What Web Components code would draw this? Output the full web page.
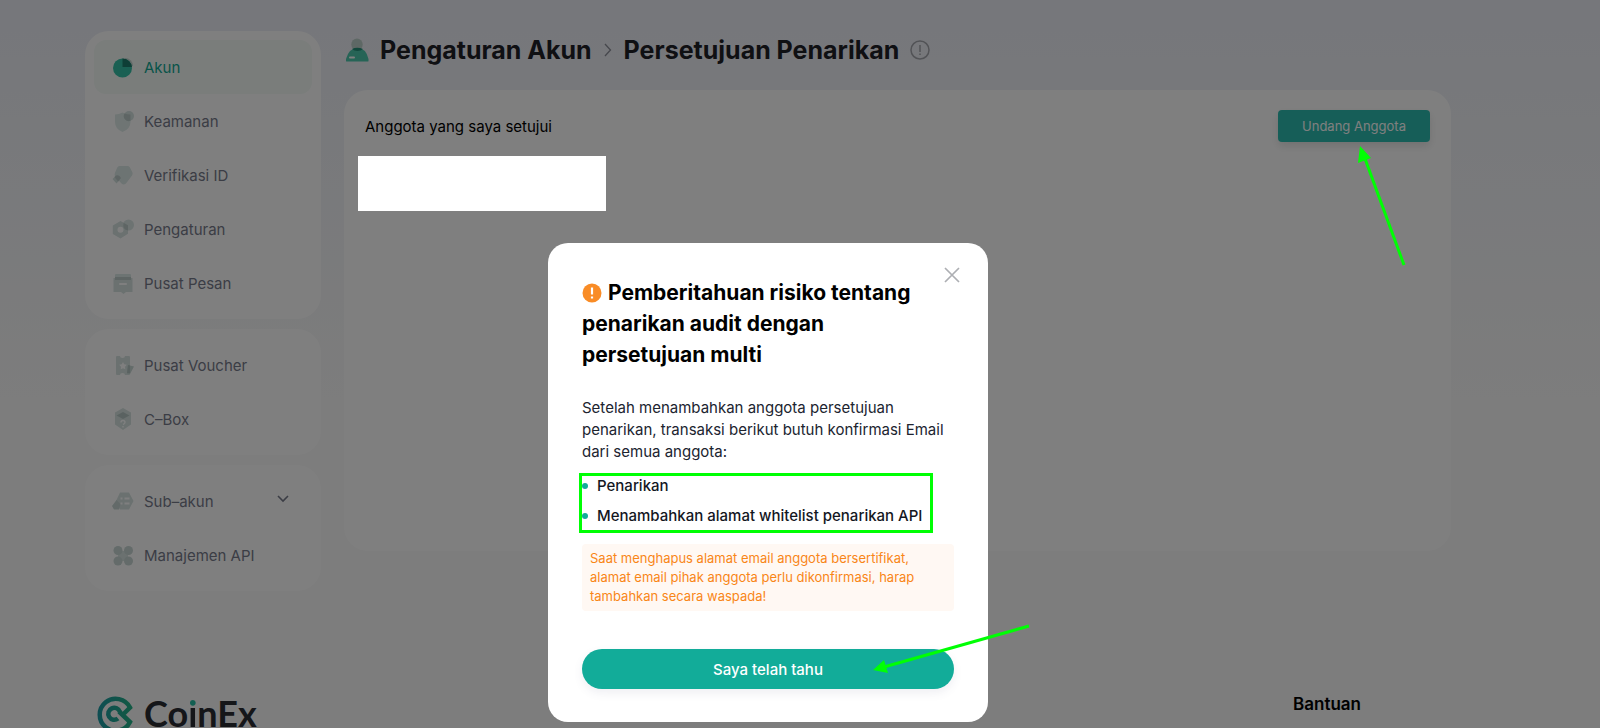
<!DOCTYPE html>
<html lang="id">
<head>
<meta charset="utf-8">
<meta name="viewport" content="width=device-width, initial-scale=1">
<title>CoinEx – Persetujuan Penarikan</title>
<style>
  html { height: 100%; }
  body {
    margin: 0;
    min-height: 100%;
    overflow: hidden;
    font-family: Inter, "Noto Sans", sans-serif;
    font-size: 15px;
    color: #000;
    background: linear-gradient(#eceef6, #f0f2f7 120px, #fafafa 400px) #fafafa;
  }
</style>
</head>
<body>
<account-page></account-page>
<risk-dialog></risk-dialog>

<script>
const define = (name, html, setup) => {
  const template = document.createElement('template');
  template.innerHTML = html;
  customElements.define(name, class extends HTMLElement {
    constructor() {
      super();
      this.attachShadow({ mode: 'open' }).append(template.content.cloneNode(true));
    }
    connectedCallback() { if (setup) setup(this, this.shadowRoot); }
  });
};

const icons = {
  akun: '<path d="M12 3a8 8 0 0 1 8 8h-8z" transform="translate(1 -1)" fill="#c7d6d2"/><circle cx="10.500" cy="12" r="9.500" fill="#35c0a6"/><path d="M10.500 2.500A9.500 9.500 0 0 1 20 11h-9.500z" fill="#1c7d6d"/>',
  keamanan: '<path d="M3 4.500q4 0 7.500-2 3.500 2 8 2V12q0 7-8 10-7.500-3-7.500-10z" fill="#deebe9"/><circle cx="17" cy="6" r="5" fill="#d5e2e0"/><path d="M12.500 3.500q3 1 6 1V10.800a5 5 0 0 1-6-7.300z" fill="#bccbc9"/>',
  id: '<path d="M7.500 2h8q1.500 0 2.300 1.200l2.600 5q.600 1.500-.200 3L14 19.500q-2.500 1.800-4.500 0L3.500 13q-1.500-2-.600-4L5 4q.800-2 2.500-2z" fill="#dbe8e6"/><path d="M.500 15 4 11.500l4 4L4.500 19.500z" fill="#d3e1df"/><path d="M4 11.500q2-.500 3.500.500l1.500 2-3 3.500L2.500 13z" fill="#bccbc9"/>',
  setting: '<path fill-rule="evenodd" d="M8.500 3 16 7.200v8.600L8.500 20.500.800 16V7.500zM8.500 8.800a3 3 0 1 0 0 6 3 3 0 0 0 0-6z" fill="#d6e3e1"/><circle cx="16.500" cy="7" r="5.500" fill="#dae7e5"/><path d="M11.500 4.700 16 7.200v5.300q-6-1-4.500-7.800z" fill="#bccbc9"/>',
  pesan: '<rect x="3" y="2" width="16" height="5" rx="1" fill="#dbe8e6"/><path d="M2 6h18.500v14H14l-2.500 2L9 20H1.500V6z" fill="#d6e3e1"/><rect x="3" y="5" width="16" height="3" fill="#bccbc9"/><rect x="7" y="11" width="8" height="2" rx="1" fill="#fff"/>',
  voucher: '<path fill-rule="evenodd" d="M5 2h3q0 2 2.500 2T13 2h4q1 0 1 1v17q0 1-1 1h-4q0-2-2.500-2T8 21H5q-1 0-1-1V3q0-1 1-1zM11 8l1.200 2.200 2.600.500-1.800 2 .300 2.500-2.300-1-2.300 1 .300-2.500-1.800-2 2.600-.500z" fill="#d6e3e1"/><path d="m16 11 6 1.500-4 7.500h-3z" fill="#c9d8d5"/><path d="m16 11 2 .500V19h-3z" fill="#b5c5c2"/>',
  box: '<path d="m11 0 8 4.500v12L11 22l-8-5.500v-12z" fill="#d6e3e1"/><path d="m11 4 6.500 3.500L11 11 4.500 7.500z" fill="#b5c5c2"/><path d="M9 14.500q0-2 2-2t2 2q0 1-2 2m0 1.500v1.500" fill="none" stroke="#fff" stroke-width="1.400"/>',
  sub: '<path d="M8 2.500h9l4.500 8.500-4.500 8.500H8L4 11z" fill="#d6e3e1"/><path d="M0 16 4.500 10l4 4-1.500 5.500H2z" fill="#c6d5d3"/><path d="M8.500 8.500h2m2 0h5m-9 5h2m2 0h5" stroke="#fff" stroke-width="1.800"/>',
  api: '<rect x="6" y="7" width="10" height="10" fill="#d6e3e1"/><g fill="#c8d7d4"><circle cx="6" cy="6.500" r="4.500"/><circle cx="16.500" cy="6.500" r="4.500"/><circle cx="6" cy="17" r="4.500"/><circle cx="16.500" cy="17" r="4.500"/></g>'
};

define('menu-card', `
  <style>
    :host { display: block; background: #fff; border-radius: 24px; padding: 9px; }
    nav { display: flex; flex-direction: column; }
  </style>
  <nav><slot></slot></nav>`);

define('menu-item', `
  <style>
    :host { display: block; color: #777b8b; }
    :host([active]) { color: #10a893; background: #f4fbf7; border-radius: 12px; }
    a {
      display: flex; align-items: center; gap: 10px; height: 54px; padding: 0 23px 0 18px;
      box-sizing: border-box; color: inherit; text-decoration: none;
    }
    svg { flex: none; }
    span { flex: 1; white-space: nowrap; }
    .chevron { display: none; }
    :host([expandable]) .chevron { display: block; }
  </style>
  <a href="#"><svg class="icon" width="22" height="22" viewBox="0 0 22 22" aria-hidden="true"></svg><span><slot></slot></span>
    <svg class="chevron" width="12" height="12" viewBox="0 0 12 12" aria-hidden="true"><path d="m1 1 5 5 5-5" fill="none" stroke="#777b8b" stroke-width="1.600"/></svg></a>`,
  (host, root) => { root.querySelector('.icon').innerHTML = icons[host.getAttribute('icon')]; });

define('side-menu', `
  <style>:host { display: flex; flex-direction: column; gap: 10px; }</style>
  <menu-card>
    <menu-item icon="akun" active>Akun</menu-item>
    <menu-item icon="keamanan">Keamanan</menu-item>
    <menu-item icon="id">Verifikasi ID</menu-item>
    <menu-item icon="setting">Pengaturan</menu-item>
    <menu-item icon="pesan">Pusat Pesan</menu-item>
  </menu-card>
  <menu-card>
    <menu-item icon="voucher">Pusat Voucher</menu-item>
    <menu-item icon="box">C–Box</menu-item>
  </menu-card>
  <menu-card>
    <menu-item icon="sub" expandable>Sub–akun</menu-item>
    <menu-item icon="api">Manajemen API</menu-item>
  </menu-card>`);

define('page-title', `
  <style>
    :host { display: block; }
    h1 {
      display: flex; align-items: center; gap: 11px; margin: 0; height: 38px;
      font-size: 25px; font-weight: 700; line-height: 38px; color: #1f2027; white-space: nowrap;
    }
    a { color: inherit; text-decoration: none; }
    svg { flex: none; }
  </style>
  <h1>
    <svg width="24" height="26" viewBox="0 0 24 26" aria-hidden="true"><ellipse cx="12" cy="7.500" rx="5.700" ry="6" fill="#bdd0ca"/><path d="M1 24v-2Q4 11 12.500 11T23.500 22v2q0 .500-1 .500H2q-1 0-1-.500z" fill="#4cc9ad"/><path d="M7 12q5-2.500 11 0-2 2-5.500 2T7 12z" fill="#249079"/><rect x="4" y="19.500" width="6" height="2" rx="1" fill="#fff"/></svg>
    <a href="#">Pengaturan Akun</a>
    <svg width="10" height="14" viewBox="0 0 10 14" aria-hidden="true"><path d="m2 1 5.500 6L2 13" fill="none" stroke="#8c8f99" stroke-width="1.300"/></svg>
    <span>Persetujuan Penarikan</span>
    <svg width="20" height="20" viewBox="0 0 20 20" aria-hidden="true"><circle cx="10" cy="10" r="9" fill="none" stroke="#a4a6ad" stroke-width="1.500"/><path d="M10 5v7m0 1.500V15" stroke="#a4a6ad" stroke-width="1.500"/></svg>
  </h1>`);

define('member-panel', `
  <style>
    :host {
      display: block; position: relative; box-sizing: border-box; min-height: 461px;
      padding: 20px 21px; background: #fff; border-radius: 24px;
    }
    header { display: flex; align-items: center; justify-content: space-between; }
    h2 { margin: 0; font-size: 15px; font-weight: 400; color: #000; }
    .invite { position: relative; }
    button {
      display: block; width: 152px; height: 32px; border: 0; border-radius: 4px; padding: 0;
      background: #2cbdb1; color: #fff; font: 400 13px Inter, "Noto Sans", sans-serif;
      box-shadow: 0 4px 8px #0000001c;
    }
    /* Marks that sit above the dimmed page */
    .mask { position: absolute; z-index: 3; left: 14px; top: 66px; width: 248px; height: 55px; background: #fff; }
    .arrow { position: absolute; z-index: 3; left: 76px; top: 34px; }
  </style>
  <header>
    <h2>Anggota yang saya setujui</h2>
    <div class="invite">
      <button type="button">Undang Anggota</button>
      <svg class="arrow" width="56" height="124" viewBox="0 0 56 124" aria-hidden="true"><path d="M50 121 10 12" stroke="#00ff04" stroke-width="3"/><path d="m6 2 11 12-13 5z" fill="#00ff04"/></svg>
    </div>
  </header>
  <div class="mask"></div>`);

define('coinex-logo', `
  <style>
    :host { display: flex; align-items: flex-start; gap: 9px; }
    svg { flex: none; }
    span { margin-top: 4px; font: 700 36px/28px Lato, sans-serif; color: #2a2c32; }
    i { font-style: normal; background: linear-gradient(#25bfa5 17px, #2a2c32 17px); -webkit-background-clip: text; background-clip: text; color: transparent; }
  </style>
  <svg width="38" height="40" viewBox="0 0 38 40" aria-hidden="true">
    <defs><linearGradient id="g" gradientUnits="userSpaceOnUse" x1="0" y1="0" x2="38" y2="0"><stop offset="0" stop-color="#1d9aa6"/><stop offset="1" stop-color="#25b585"/></linearGradient></defs>
    <g fill="none" stroke="url(#g)" stroke-width="4.500">
      <path d="m26 19.500 7-7A16 16 0 1 0 33 27L22 16.500"/>
      <path d="M23 17A6 6 0 1 0 21 23.500"/>
    </g>
  </svg>
  <span>Co<i>i</i>nEx</span>`);

define('page-footer', `
  <style>
    :host { display: flex; justify-content: space-between; align-items: flex-start; }
    h3 { margin: 0; font-size: 17px; font-weight: 600; line-height: 18px; }
  </style>
  <coinex-logo></coinex-logo><h3>Bantuan</h3>`);

define('account-page', `
  <style>
    :host { display: block; padding: 31px 149px 0 85px; }
    .columns { display: grid; grid-template-columns: 236px minmax(0, 1fr); gap: 23px; align-items: start; }
    main { display: flex; flex-direction: column; gap: 21px; }
    page-title { padding: 0 0 0 1px; }
    page-footer { margin-top: 104px; padding: 0 90px 0 12px; }
  </style>
  <div class="columns">
    <side-menu></side-menu>
    <main><page-title></page-title><member-panel></member-panel></main>
  </div>
  <page-footer></page-footer>`);

define('risk-dialog', `
  <style>
    :host {
      position: fixed; inset: 0; z-index: 2; display: flex; justify-content: center; align-items: flex-start;
      box-sizing: border-box; padding: 243px 64px 0 0; background: rgba(0, 0, 0, .5);
    }
    section {
      position: relative; box-sizing: border-box; width: 440px; padding: 34px 34px 33px;
      background: #fff; border-radius: 20px;
    }
    .close { position: absolute; top: 20px; right: 24px; width: 24px; height: 24px; padding: 4px; border: 0; background: none; }
    .close svg { display: block; }
    h2 { margin: 0 0 27px; font-size: 21px; font-weight: 700; line-height: 31px; width: 340px; }
    h2 svg { vertical-align: -3px; margin-right: 6px; }
    p { margin: 0; }
    .lead { line-height: 22px; color: #20242f; }
    .rules { position: relative; margin: 8px 0 13px; }
    ul { margin: 0; padding: 0; list-style: none; font-weight: 500; color: #14171f; }
    li { display: flex; align-items: center; gap: 9px; line-height: 30px; white-space: nowrap; }
    li::before { content: ""; width: 6px; height: 6px; border-radius: 50%; background: #12ac99; }
    .frame { position: absolute; left: -3px; top: 2px; width: 354px; height: 60px; box-sizing: border-box; border: 3px solid #00ff04; }
    .warning { padding: 5px 8px; border-radius: 4px; background: #fff8f3; color: #f98617; font-size: 13px; line-height: 19px; }
    .confirm { position: relative; margin-top: 38px; }
    .confirm button {
      display: block; width: 100%; height: 40px; border: 0; border-radius: 20px; background: #12ac99;
      color: #fff; font: 500 15px Inter, "Noto Sans", sans-serif; box-shadow: 0 4px 10px #50508018;
    }
    .arrow { position: absolute; left: 288px; top: -28px; }
  </style>
  <section role="dialog" aria-modal="true" aria-labelledby="title">
    <button class="close" type="button" aria-label="Tutup"><svg width="16" height="16" viewBox="0 0 16 16"><path d="m1 1 14 14M15 1 1 15" stroke="#adafb3" stroke-width="1.700"/></svg></button>
    <h2 id="title"><svg width="20" height="20" viewBox="0 0 20 20" aria-hidden="true"><circle cx="10" cy="10" r="9.500" fill="#f98c26"/><path d="M10 4.500v7m0 2v2" stroke="#fff" stroke-width="2.200"/></svg>Pemberitahuan risiko tentang penarikan audit dengan persetujuan multi</h2>
    <p class="lead">Setelah menambahkan anggota persetujuan penarikan, transaksi berikut butuh konfirmasi Email dari semua anggota:</p>
    <div class="rules">
      <ul>
        <li>Penarikan</li>
        <li>Menambahkan alamat whitelist penarikan API</li>
      </ul>
      <div class="frame"></div>
    </div>
    <p class="warning">Saat menghapus alamat email anggota bersertifikat, alamat email pihak anggota perlu dikonfirmasi, harap tambahkan secara waspada!</p>
    <div class="confirm">
      <button type="button">Saya telah tahu</button>
      <svg class="arrow" width="164" height="56" viewBox="0 0 164 56" aria-hidden="true"><path d="M159 5 14 46" stroke="#00ff04" stroke-width="3"/><path d="m3 49 11-10 4 13z" fill="#00ff04"/></svg>
    </div>
  </section>`);
</script>
</body>
</html>
